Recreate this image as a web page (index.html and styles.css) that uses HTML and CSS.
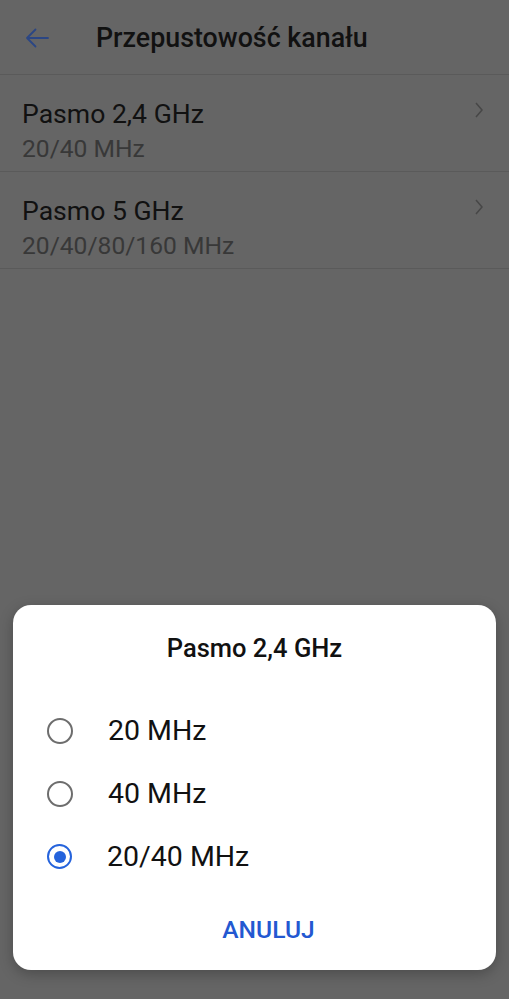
FILE: index.html
```html
<!DOCTYPE html>
<html lang="pl">
<head>
<meta charset="utf-8">
<title>Przepustowość kanału</title>
<link rel="stylesheet" href="styles.css">
</head>
<body>
<div class="screen">
  <header class="appbar">
    <svg class="back" width="24" height="20" viewBox="0 0 24 20"><path d="M23 10H2M10.5 1.5L2 10l8.5 8.5" fill="none" stroke="#2b4684" stroke-width="1.8" stroke-linecap="round" stroke-linejoin="round"/></svg>
    <h1 class="appbar-title">Przepustowość kanału</h1>
  </header>
  <ul class="list">
    <li class="row">
      <div class="row-text">
        <div class="row-title">Pasmo 2,4 GHz</div>
        <div class="row-sub">20/40 MHz</div>
      </div>
      <svg class="chev" width="8" height="16" viewBox="0 0 8 16"><path d="M1 1l6 7-6 7" fill="none" stroke="#474747" stroke-width="1.5"/></svg>
    </li>
    <li class="row">
      <div class="row-text">
        <div class="row-title">Pasmo 5 GHz</div>
        <div class="row-sub">20/40/80/160 MHz</div>
      </div>
      <svg class="chev" width="8" height="16" viewBox="0 0 8 16"><path d="M1 1l6 7-6 7" fill="none" stroke="#474747" stroke-width="1.5"/></svg>
    </li>
  </ul>
</div>
<div class="dialog">
  <div class="dialog-title">Pasmo 2,4 GHz</div>
  <div class="options">
    <div class="option"><span class="radio"></span><span class="opt-label">20 MHz</span></div>
    <div class="option"><span class="radio"></span><span class="opt-label">40 MHz</span></div>
    <div class="option"><span class="radio checked"></span><span class="opt-label">20/40 MHz</span></div>
  </div>
  <div class="actions"><span class="btn">ANULUJ</span></div>
</div>
</body>
</html>
```
FILE: styles.css
```css
html, body {
  margin: 0;
  padding: 0;
}
body {
  width: 509px;
  height: 999px;
  background: #656565;
  font-family: Roboto, "Noto Sans", sans-serif;
  color: #111;
  overflow: hidden;
  display: flex;
  flex-direction: column;
}
.screen {
  flex: 1;
}
.appbar {
  height: 74px;
  display: flex;
  align-items: center;
  border-bottom: 1px solid #5a5a5a;
}
.back {
  margin-left: 25px;
  margin-top: 2px;
}
.appbar-title {
  margin: 2px 0 0 47px;
  font-size: 26.8px;
  line-height: 32px;
  font-weight: 500;
  color: #111;
}
.list {
  list-style: none;
  margin: 0;
  padding: 0;
}
.row {
  height: 96px;
  display: flex;
  align-items: flex-start;
  justify-content: space-between;
  border-bottom: 1px solid #5a5a5a;
  padding: 0 26px 0 22px;
}
.row-text {
  padding-top: 23px;
}
.row-title {
  font-size: 26.6px;
  line-height: 32px;
  color: #111;
}
.row-sub {
  font-size: 24.6px;
  line-height: 30px;
  color: #383838;
  margin-top: 4px;
}
.chev {
  margin-top: 27px;
}
.dialog {
  margin: 0 13px 29px;
  height: 365px;
  background: #fff;
  border-radius: 18px;
  box-shadow: 0 4px 14px rgba(0,0,0,0.25);
  display: flex;
  flex-direction: column;
}
.dialog-title {
  text-align: center;
  font-size: 25.5px;
  font-weight: 500;
  color: #111;
  padding-top: 28px;
  line-height: 30px;
}
.options {
  margin-top: 36px;
  display: flex;
  flex-direction: column;
}
.option {
  height: 63px;
  display: flex;
  align-items: center;
  padding-left: 34px;
}
.radio {
  width: 22px;
  height: 22px;
  border: 2px solid #6d6d6d;
  border-radius: 50%;
  box-sizing: content-box;
  display: flex;
  align-items: center;
  justify-content: center;
}
.radio.checked {
  border: 2.5px solid #2563dc;
  width: 21px;
  height: 21px;
}
.radio.checked::after {
  content: "";
  width: 12px;
  height: 12px;
  border-radius: 50%;
  background: #2563dc;
}
.opt-label {
  margin-left: 35px;
  font-size: 28.5px;
  color: #111;
}
.actions {
  margin-top: 27px;
  display: flex;
  justify-content: center;
  padding-left: 28px;
}
.btn {
  font-size: 24.6px;
  line-height: 30px;
  font-weight: 500;
  color: #2358d1;
}
```
